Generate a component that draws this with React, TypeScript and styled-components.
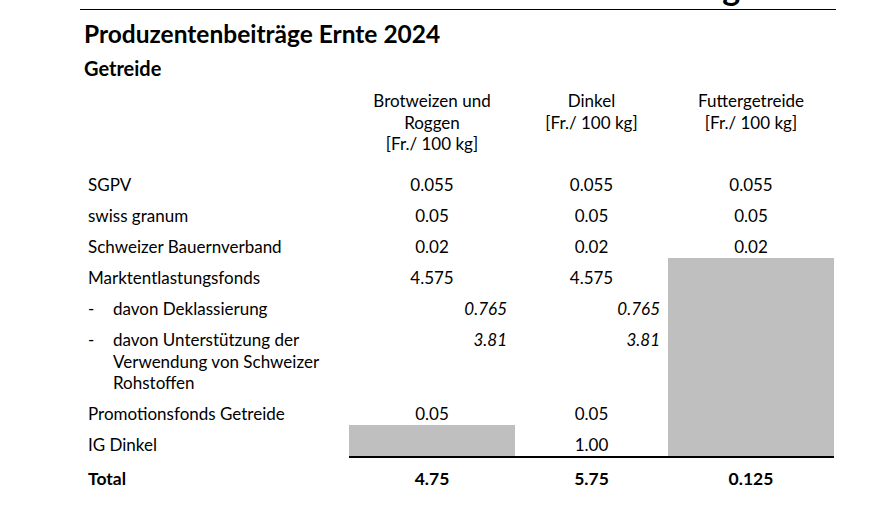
import React from "react";
import styled, { createGlobalStyle } from "styled-components";

const GlobalStyle = createGlobalStyle`
  html, body { margin: 0; padding: 0; background: #ffffff; }
  body { font-family: Lato, "Open Sans", "Liberation Sans", sans-serif; color: #000; }
`;

const Page = styled.div`
  width: 756px;
  margin-left: 80px;
`;

const TopStrip = styled.div`
  height: 9px;
  overflow: hidden;
  border-bottom: 1px solid #000;
  display: flex;
  justify-content: flex-end;
  align-items: flex-end;
  padding-right: 78px;
`;

const ClippedHeading = styled.div`
  font-size: 34px;
  font-weight: 700;
  line-height: 1;
  margin-bottom: 5px;
  white-space: nowrap;
`;

const Title = styled.h1`
  margin: 10px 0 0 4px;
  font-size: 24.5px;
  line-height: 28px;
  font-weight: 700;
`;

const Subtitle = styled.h2`
  margin: 9px 0 0 4px;
  font-size: 20px;
  line-height: 23px;
  font-weight: 700;
`;

const Table = styled.div`
  display: grid;
  grid-template-columns: 269px 166px 153px 166px;
  margin-top: 10px;
  font-size: 17px;
  line-height: 21.5px;
`;

const HeadCell = styled.div`
  text-align: center;
  padding-bottom: 10px;
`;

const Cell = styled.div<{ $grey?: boolean; $rule?: boolean; $align?: "left" | "center" | "right"; $italic?: boolean; $bold?: boolean }>`
  padding: 9.5px 8px 0 8px;
  background: ${(p) => (p.$grey ? "#bfbfbf" : "transparent")};
  border-bottom: ${(p) => (p.$rule ? "2px solid #000" : "0")};
  text-align: ${(p) => p.$align || "center"};
  font-style: ${(p) => (p.$italic ? "italic" : "normal")};
  font-weight: ${(p) => (p.$bold ? 700 : 400)};
`;

const TotalCell = styled(Cell)`
  padding-top: 10px;
  padding-bottom: 10px;
  font-size: 17.5px;
`;

const Bullet = styled.div`
  display: flex;
`;

const Dash = styled.span`
  flex: 0 0 25px;
`;

const BulletText = styled.span`
  max-width: 225px;
`;

type Row = {
  label: React.ReactNode;
  values: [string, string, string];
  italic?: boolean;
  grey?: [boolean, boolean, boolean];
};

const rows: Row[] = [
  { label: "SGPV", values: ["0.055", "0.055", "0.055"] },
  { label: "swiss granum", values: ["0.05", "0.05", "0.05"] },
  { label: "Schweizer Bauernverband", values: ["0.02", "0.02", "0.02"] },
  { label: "Marktentlastungsfonds", values: ["4.575", "4.575", ""], grey: [false, false, true] },
  {
    label: (
      <Bullet>
        <Dash>-</Dash>
        <BulletText>davon Deklassierung</BulletText>
      </Bullet>
    ),
    values: ["0.765", "0.765", ""],
    italic: true,
    grey: [false, false, true],
  },
  {
    label: (
      <Bullet>
        <Dash>-</Dash>
        <BulletText>davon Unterstützung der Verwendung von Schweizer Rohstoffen</BulletText>
      </Bullet>
    ),
    values: ["3.81", "3.81", ""],
    italic: true,
    grey: [false, false, true],
  },
  { label: "Promotionsfonds Getreide", values: ["0.05", "0.05", ""], grey: [false, false, true] },
  { label: "IG Dinkel", values: ["", "1.00", ""], grey: [true, false, true] },
];

export default function App() {
  return (
    <>
      <GlobalStyle />
      <Page>
        <TopStrip>
          <ClippedHeading>Beiträge</ClippedHeading>
        </TopStrip>
        <Title>Produzentenbeiträge Ernte 2024</Title>
        <Subtitle>Getreide</Subtitle>
        <Table>
          <HeadCell />
          <HeadCell>
            Brotweizen und
            <br />
            Roggen
            <br />
            [Fr./ 100 kg]
          </HeadCell>
          <HeadCell>
            Dinkel
            <br />
            [Fr./ 100 kg]
          </HeadCell>
          <HeadCell>
            Futtergetreide
            <br />
            [Fr./ 100 kg]
          </HeadCell>
          {rows.map((r, i) => {
            const last = i === rows.length - 1;
            return (
              <React.Fragment key={i}>
                <Cell $align="left">{r.label}</Cell>
                {r.values.map((v, j) => (
                  <Cell
                    key={j}
                    $grey={r.grey?.[j]}
                    $rule={last}
                    $align={r.italic ? "right" : "center"}
                    $italic={r.italic}
                  >
                    {v}
                  </Cell>
                ))}
              </React.Fragment>
            );
          })}
          <TotalCell $align="left" $bold>
            Total
          </TotalCell>
          <TotalCell $bold>4.75</TotalCell>
          <TotalCell $bold>5.75</TotalCell>
          <TotalCell $bold>0.125</TotalCell>
        </Table>
      </Page>
    </>
  );
}
